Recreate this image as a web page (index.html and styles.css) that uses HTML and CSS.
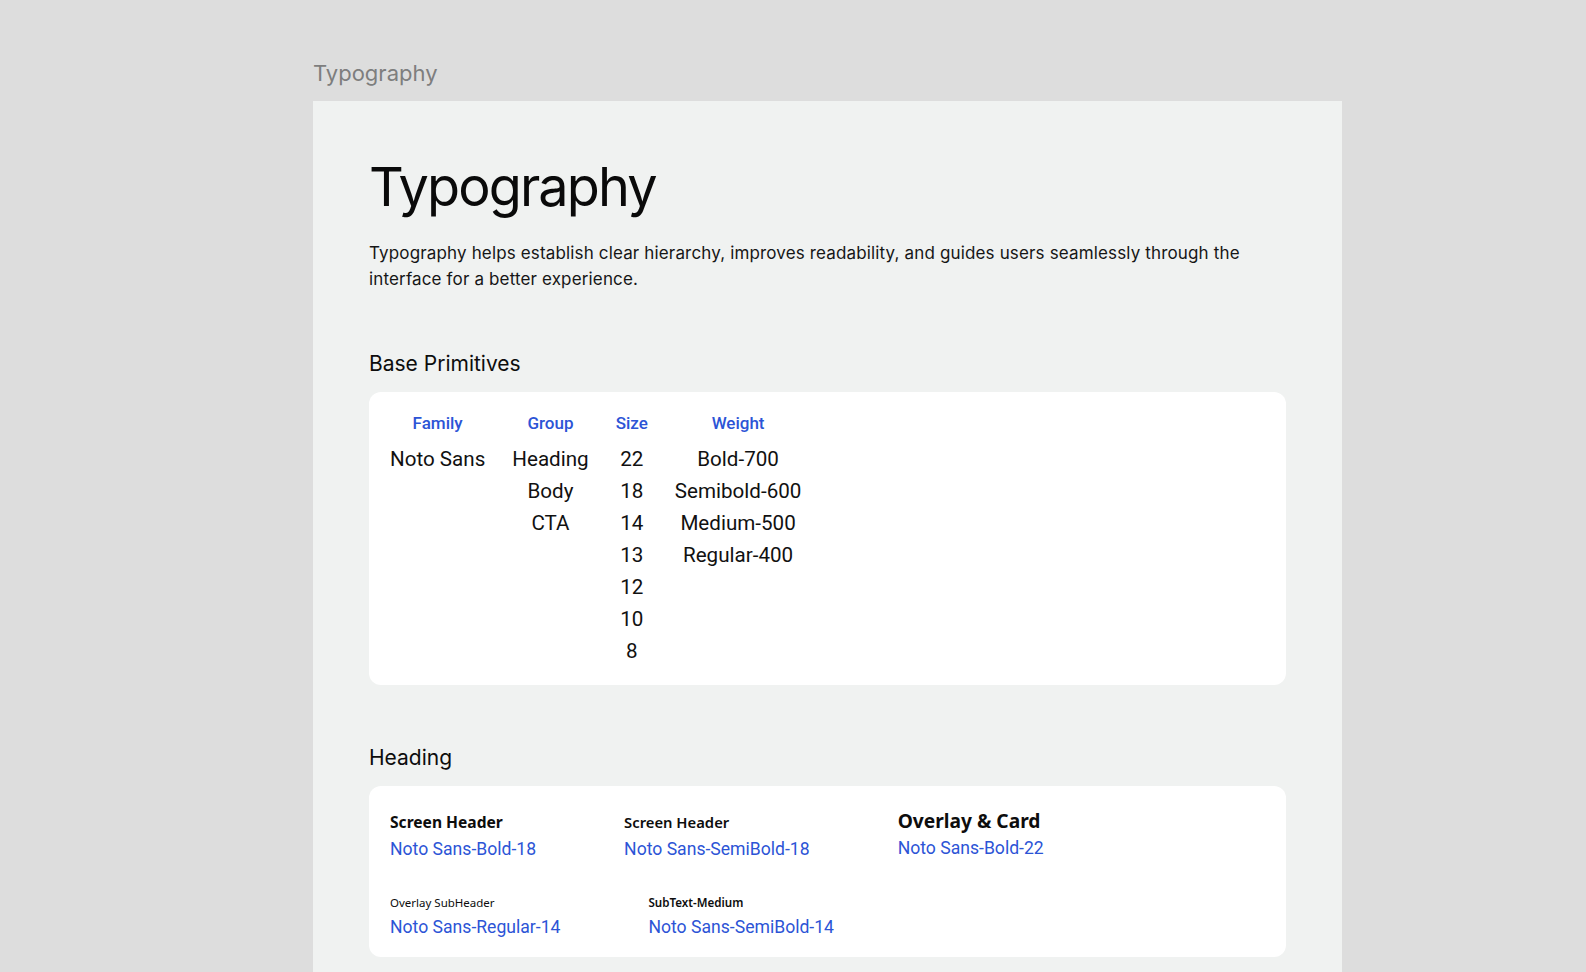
FILE: index.html
```html
<!DOCTYPE html>
<html lang="en">
<head>
<meta charset="utf-8">
<title>Typography</title>
<link rel="stylesheet" href="styles.css">
</head>
<body>
<div class="canvas">
  <div class="frame-label">Typography</div>
  <main class="frame">
    <h1 class="title">Typography</h1>
    <p class="desc">Typography helps establish clear hierarchy, improves readability, and guides users seamlessly through the interface for a better experience.</p>

    <h2 class="section-title primitives-title">Base Primitives</h2>
    <section class="card primitives">
      <div class="col">
        <div class="col-head">Family</div>
        <div class="cell">Noto Sans</div>
      </div>
      <div class="col">
        <div class="col-head">Group</div>
        <div class="cell">Heading</div>
        <div class="cell">Body</div>
        <div class="cell">CTA</div>
      </div>
      <div class="col">
        <div class="col-head">Size</div>
        <div class="cell">22</div>
        <div class="cell">18</div>
        <div class="cell">14</div>
        <div class="cell">13</div>
        <div class="cell">12</div>
        <div class="cell">10</div>
        <div class="cell">8</div>
      </div>
      <div class="col">
        <div class="col-head">Weight</div>
        <div class="cell">Bold-700</div>
        <div class="cell">Semibold-600</div>
        <div class="cell">Medium-500</div>
        <div class="cell">Regular-400</div>
      </div>
    </section>

    <h2 class="section-title heading-title">Heading</h2>
    <section class="card headings">
      <div class="spec-row row-one">
        <div class="spec">
          <div class="sample sample-bold-16">Screen Header</div>
          <div class="spec-name">Noto Sans-Bold-18</div>
        </div>
        <div class="spec">
          <div class="sample sample-semi-16">Screen Header</div>
          <div class="spec-name">Noto Sans-SemiBold-18</div>
        </div>
        <div class="spec">
          <div class="sample sample-bold-20">Overlay &amp; Card</div>
          <div class="spec-name">Noto Sans-Bold-22</div>
        </div>
      </div>
      <div class="spec-row row-two">
        <div class="spec">
          <div class="sample sample-reg-12">Overlay SubHeader</div>
          <div class="spec-name">Noto Sans-Regular-14</div>
        </div>
        <div class="spec">
          <div class="sample sample-semi-12">SubText-Medium</div>
          <div class="spec-name">Noto Sans-SemiBold-14</div>
        </div>
      </div>
    </section>
  </main>
</div>
</body>
</html>
```

FILE: styles.css
```css
* { box-sizing: border-box; }

html, body {
  margin: 0;
  padding: 0;
  background: #dddddd;
  height: 100%;
  overflow: hidden;
}

body {
  font-family: "Inter", "Liberation Sans", sans-serif;
  color: #0d0d0d;
}

.canvas {
  padding: 59px 0 0 313px;
}

.frame-label {
  font-family: "Inter", sans-serif;
  font-size: 22px;
  line-height: 28px;
  color: #7e7e7e;
  margin-bottom: 14px;
}

.frame {
  width: 1029px;
  min-height: 900px;
  background: #f0f2f1;
  padding: 54px 56px 0;
}

.title {
  margin: 0;
  font-family: "Inter", sans-serif;
  font-weight: 400;
  font-size: 54px;
  line-height: 64px;
  letter-spacing: -1.9px;
  color: #0a0a0a;
}

.desc {
  margin: 21px 0 0;
  font-family: "Inter", sans-serif;
  font-size: 17px;
  line-height: 26px;
  letter-spacing: 0.15px;
  color: #161616;
}

.section-title {
  margin: 0;
  font-family: "Inter", sans-serif;
  font-weight: 400;
  font-size: 21px;
  line-height: 28px;
  color: #0d0d0d;
}

.primitives-title { margin-top: 58px; }
.heading-title { margin-top: 59px; }

.card {
  margin-top: 14px;
  background: #ffffff;
  border-radius: 12px;
}

/* Base primitives table */
.primitives {
  height: 293px;
  display: flex;
  gap: 27px;
  padding: 21px 20px 0 21px;
  font-family: "Roboto", sans-serif;
}

.col {
  display: flex;
  flex-direction: column;
  align-items: center;
}

.col-head {
  font-size: 17px;
  line-height: 20px;
  font-weight: 500;
  color: #2c54d6;
  margin-bottom: 10px;
}

.cell {
  font-size: 20.6px;
  line-height: 32px;
  color: #111111;
}

/* Heading specimens */
.headings {
  height: 171px;
  padding: 25px 21px 0;
}

.spec-row {
  display: flex;
  gap: 88px;
  align-items: baseline;
}

.row-two { margin-top: 34px; }

.spec {
  display: flex;
  flex-direction: column;
}

.sample {
  font-family: "Noto Sans", sans-serif;
  color: #0d0d0d;
}

.sample-bold-16 { font-size: 15.6px; line-height: 20px; font-weight: 700; margin-bottom: 5px; }
.sample-semi-16 { font-size: 14.8px; line-height: 20px; font-weight: 600; margin-bottom: 5px; }
.sample-bold-20 { font-size: 19.2px; line-height: 20px; font-weight: 700; margin-bottom: 5px; }
.sample-reg-12 { font-size: 11.5px; line-height: 16px; font-weight: 400; margin-bottom: 4px; }
.sample-semi-12 { font-size: 11.6px; line-height: 16px; font-weight: 600; margin-bottom: 4px; }

.spec-name {
  font-family: "Roboto", sans-serif;
  font-size: 17.6px;
  line-height: 24px;
  color: #2c54d6;
}
```
